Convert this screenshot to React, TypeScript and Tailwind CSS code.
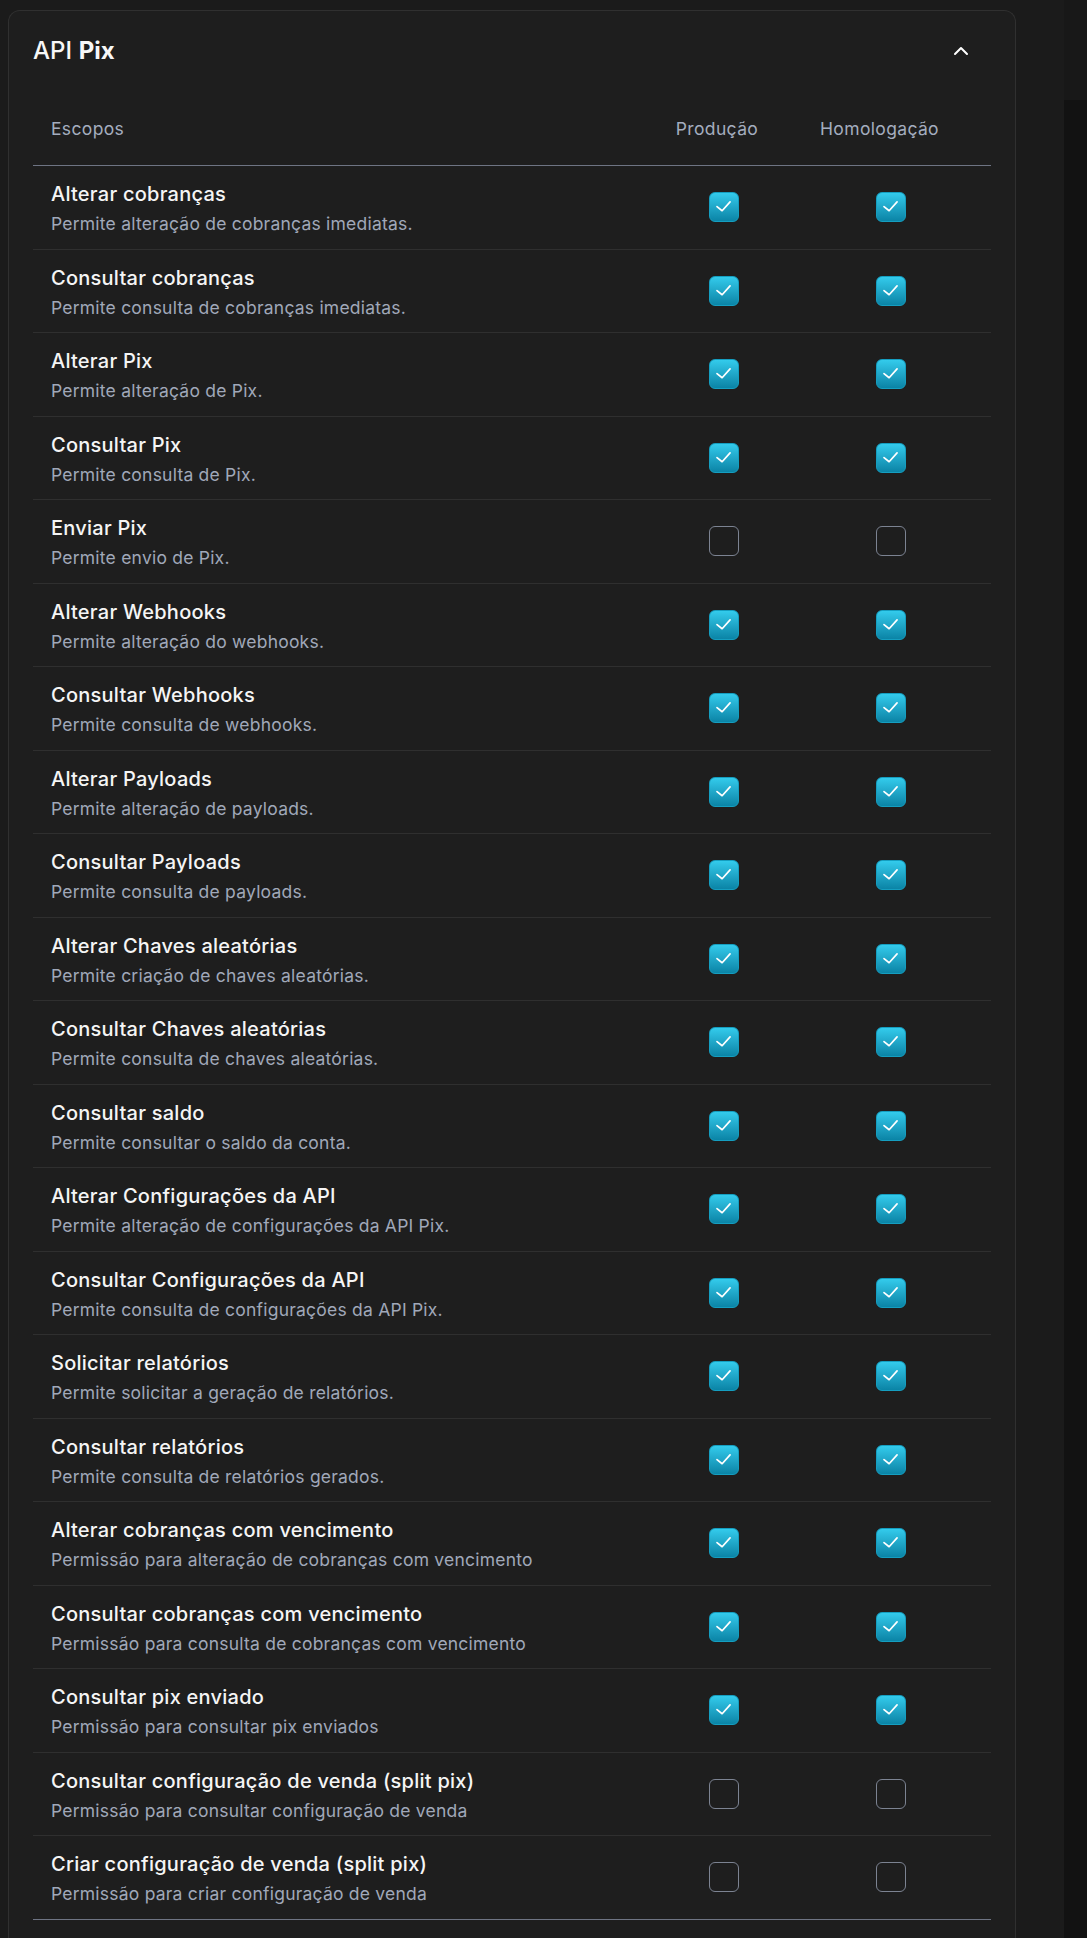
import { ChevronUp } from "lucide-react";

interface Scope {
  title: string;
  desc: string;
  prod: boolean;
  homolog: boolean;
}

const scopes: Scope[] = [
  { title: "Alterar cobranças", desc: "Permite alteração de cobranças imediatas.", prod: true, homolog: true },
  { title: "Consultar cobranças", desc: "Permite consulta de cobranças imediatas.", prod: true, homolog: true },
  { title: "Alterar Pix", desc: "Permite alteração de Pix.", prod: true, homolog: true },
  { title: "Consultar Pix", desc: "Permite consulta de Pix.", prod: true, homolog: true },
  { title: "Enviar Pix", desc: "Permite envio de Pix.", prod: false, homolog: false },
  { title: "Alterar Webhooks", desc: "Permite alteração do webhooks.", prod: true, homolog: true },
  { title: "Consultar Webhooks", desc: "Permite consulta de webhooks.", prod: true, homolog: true },
  { title: "Alterar Payloads", desc: "Permite alteração de payloads.", prod: true, homolog: true },
  { title: "Consultar Payloads", desc: "Permite consulta de payloads.", prod: true, homolog: true },
  { title: "Alterar Chaves aleatórias", desc: "Permite criação de chaves aleatórias.", prod: true, homolog: true },
  { title: "Consultar Chaves aleatórias", desc: "Permite consulta de chaves aleatórias.", prod: true, homolog: true },
  { title: "Consultar saldo", desc: "Permite consultar o saldo da conta.", prod: true, homolog: true },
  { title: "Alterar Configurações da API", desc: "Permite alteração de configurações da API Pix.", prod: true, homolog: true },
  { title: "Consultar Configurações da API", desc: "Permite consulta de configurações da API Pix.", prod: true, homolog: true },
  { title: "Solicitar relatórios", desc: "Permite solicitar a geração de relatórios.", prod: true, homolog: true },
  { title: "Consultar relatórios", desc: "Permite consulta de relatórios gerados.", prod: true, homolog: true },
  { title: "Alterar cobranças com vencimento", desc: "Permissão para alteração de cobranças com vencimento", prod: true, homolog: true },
  { title: "Consultar cobranças com vencimento", desc: "Permissão para consulta de cobranças com vencimento", prod: true, homolog: true },
  { title: "Consultar pix enviado", desc: "Permissão para consultar pix enviados", prod: true, homolog: true },
  { title: "Consultar configuração de venda (split pix)", desc: "Permissão para consultar configuração de venda", prod: false, homolog: false },
  { title: "Criar configuração de venda (split pix)", desc: "Permissão para criar configuração de venda", prod: false, homolog: false },
];

function Checkbox({ checked }: { checked: boolean }) {
  if (!checked) {
    return <div className="h-[30px] w-[30px] rounded-[6px] border-[1.5px] border-[#7c8392]"></div>;
  }
  return (
    <div className="flex h-[30px] w-[30px] items-center justify-center rounded-[6px] border border-[#159ec0] bg-gradient-to-b from-[#33cbec] to-[#0a84a6]">
      <svg width="30" height="30" viewBox="0 0 30 30" fill="none">
        <path d="M7.5 14.5 L13 19 L21.5 9.5" stroke="white" strokeWidth="1.8" strokeLinecap="round" strokeLinejoin="round" />
      </svg>
    </div>
  );
}

function App() {
  return (
    <div className="flex min-h-[1938px] w-full bg-[#1b1b1b] font-['Inter','Noto_Sans',sans-serif]">
      <div className="w-[1064px] pl-2 pt-[10px]">
        <div className="h-[1940px] w-[1008px] rounded-t-[12px] border border-b-0 border-[#303030] bg-[#1e1e1e] px-6 pt-6">
          <div className="flex items-center justify-between">
            <h2 className="text-[24px] leading-[32px] text-[#f7f7f7]">
              <span className="font-medium">API</span> <span className="font-bold">Pix</span>
            </h2>
            <ChevronUp className="mr-[18px] h-6 w-6 text-white" strokeWidth={2} />
          </div>

          <div className="mt-[26px]">
            <div className="grid h-[73px] grid-cols-[1fr_180px_154px_23px] items-center border-b border-[#6e7483] pt-[1px] text-[17.5px] tracking-[0.35px] text-[#a4adbf]">
              <span className="pl-[18px]">Escopos</span>
              <span className="pr-[14px] text-center">Produção</span>
              <span className="pr-[23px] text-center">Homologação</span>
              <span></span>
            </div>

            {scopes.map((s, i) => (
              <div
                key={s.title}
                className={
                  "grid h-[83.5px] grid-cols-[1fr_180px_154px_23px] items-center border-b " +
                  (i === scopes.length - 1 ? "border-[#6e7483]" : "border-[#2f2f2f]")
                }
              >
                <div className="self-start pl-[18px] pt-[14px]">
                  <p className="text-[20px] leading-[28px] font-medium tracking-[0.25px] text-[#f5f5f5]">{s.title}</p>
                  <p className="mt-[4px] text-[17.5px] leading-[24px] tracking-[0.22px] text-[#a0a8b9]">{s.desc}</p>
                </div>
                <div className="flex justify-center">
                  <Checkbox checked={s.prod} />
                </div>
                <div className="flex justify-center">
                  <Checkbox checked={s.homolog} />
                </div>
                <span></span>
              </div>
            ))}
          </div>
        </div>
      </div>
      <div className="flex w-[23px] flex-col">
        <div className="h-[100px] bg-[#181818]"></div>
        <div className="flex-1 bg-[#121212]"></div>
      </div>
    </div>
  );
}

export default App;
